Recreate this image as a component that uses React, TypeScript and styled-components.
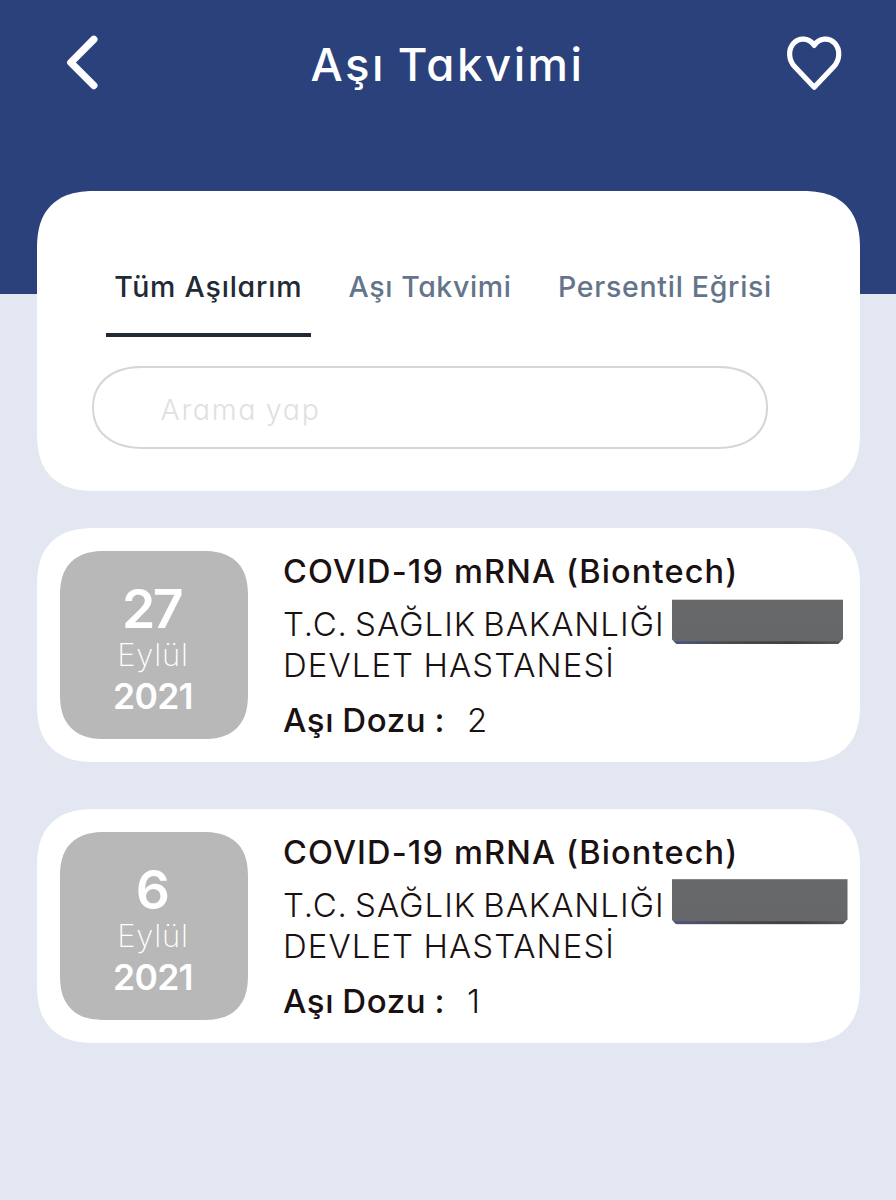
import React from 'react';
import styled, { createGlobalStyle } from 'styled-components';

const GlobalStyle = createGlobalStyle`
  * { box-sizing: border-box; }
  body {
    margin: 0;
    background: #e2e7f1;
    font-family: Inter, "Liberation Sans", sans-serif;
    font-feature-settings: "cv11";
  }
  h1, h2, p { margin: 0; font-weight: inherit; }
  button { padding: 0; border: 0; background: none; font: inherit; font-feature-settings: inherit; }
`;

const Screen = styled.div`
  min-height: 1200px;
  padding-bottom: 40px;
  background: linear-gradient(#2b417b 294px, #e2e7f1 294px);
`;

const Header = styled.header`
  display: flex;
  justify-content: space-between;
  height: 191px;
  padding: 35px 54px 0 66px;
  color: #fff;
`;

const IconButton = styled.button`
  display: block;
  height: 56px;
  color: inherit;

  svg { display: block; }
`;

const Title = styled.h1`
  height: 60px;
  padding-left: 10px;
  font-size: 45.5px;
  font-weight: 500;
  line-height: 60px;
  letter-spacing: 2.5px;
  word-spacing: -3px;
  white-space: nowrap;
`;

const Surface = styled.section`
  margin: 0 36.5px;
  background: #fff;
  border-radius: 50px;

  @supports (corner-shape: squircle) {
    border-radius: 58px;
    corner-shape: superellipse(1.3);
  }
`;

const FilterPanel = styled(Surface)`
  height: 300px;
  padding: 74px 55.5px 0;
`;

const Tabs = styled.nav`
  display: flex;
  height: 72px;
  padding-left: 14px;
`;

const Tab = styled.button<{ $active?: boolean; $width: number; $tracking: number }>`
  width: ${(p) => p.$width}px;
  margin-right: 15px;
  padding-bottom: 25px;
  border-bottom: 4.5px solid ${(p) => (p.$active ? '#212a35' : 'transparent')};
  color: ${(p) => (p.$active ? '#212a35' : '#64748a')};
  font-size: 28.5px;
  font-weight: ${(p) => (p.$active ? 500 : 460)};
  line-height: 43px;
  letter-spacing: ${(p) => p.$tracking}px;
  text-align: center;
  white-space: nowrap;
`;

const SearchField = styled.input`
  display: block;
  width: 676px;
  height: 83px;
  margin-top: 29px;
  padding: 4px 68px 0 66.5px;
  border: 2px solid #d6d6d6;
  border-radius: 42px;
  outline: none;
  background: transparent;
  font-family: inherit;
  font-feature-settings: inherit;
  font-size: 28.5px;
  font-weight: 300;
  letter-spacing: 1.7px;
  word-spacing: -1px;

  @supports (corner-shape: squircle) {
    border-radius: 50px / 41.5px;
    corner-shape: superellipse(1.15);
  }

  &::placeholder { color: #e0e0e0; opacity: 1; }
`;

const List = styled.main`
  display: flex;
  flex-direction: column;
  gap: 47px;
  padding-top: 37px;
`;

const Card = styled(Surface)`
  display: flex;
  height: 234px;
  padding: 23px 0 0 23px;
`;

const DateTile = styled.div`
  display: flex;
  flex-direction: column;
  align-items: center;
  width: 188px;
  height: 188px;
  padding: 28px 1px 0 0;
  background: #b8b8b8;
  border-radius: 40px;
  color: #fff;
  text-align: center;

  @supports (corner-shape: squircle) {
    border-radius: 45px;
    corner-shape: superellipse(1.3);
  }
`;

const Day = styled.span`
  margin-right: 3px;
  font-size: 53.5px;
  font-weight: 560;
  line-height: 60px;
  letter-spacing: -2.5px;
`;

const Month = styled.span`
  font-size: 31px;
  font-weight: 220;
  line-height: 32px;
  letter-spacing: 0.8px;
`;

const Year = styled.span`
  font-size: 35.5px;
  font-weight: 580;
  line-height: 51px;
  letter-spacing: -0.7px;
`;

const Info = styled.div`
  flex: 1;
  margin-left: 35.5px;
  color: #1a1112;
  white-space: nowrap;
`;

const VaccineName = styled.h2`
  font-size: 32.5px;
  font-weight: 500;
  line-height: 42px;
  letter-spacing: 1.15px;
`;

const Hospital = styled.div`
  margin-top: 10px;
  font-size: 33px;
  font-weight: 330;
`;

const HospitalLine = styled.p<{ $tracking: number; $gap?: number }>`
  display: flex;
  align-items: center;
  height: 41px;
  letter-spacing: ${(p) => p.$tracking}px;
  word-spacing: ${(p) => p.$gap ?? 0}px;
`;

const LineText = styled.span`
  width: 388.5px;
`;

const Redaction = styled.i<{ $width: number; $height: number; $lift: number }>`
  width: ${(p) => p.$width}px;
  height: ${(p) => p.$height}px;
  margin: -10px 0;
  transform: translateY(-${(p) => p.$lift}px);
  background:
    linear-gradient(90deg, #4a5588, #4b4b50 30%, #404042 70%, #58585a) bottom / 100% 3px no-repeat,
    linear-gradient(#68696b, #666769);
  clip-path: polygon(0 0, 100% 0, 100% calc(100% - 5px), calc(100% - 5px) 100%, 5px 100%, 0 calc(100% - 5px));
`;

const Dose = styled.p`
  display: flex;
  margin-top: 14px;
  font-size: 33px;
  line-height: 42px;
`;

const DoseLabel = styled.span`
  width: 184px;
  font-weight: 500;
  letter-spacing: 0.55px;
  word-spacing: -1px;
`;

const DoseValue = styled.span`
  font-weight: 330;
`;

type Vaccine = {
  day: string;
  dose: string;
  bar: { width: number; height: number; lift: number };
};

const vaccines: Vaccine[] = [
  { day: '27', dose: '2', bar: { width: 171.5, height: 44.5, lift: 1.8 } },
  { day: '6', dose: '1', bar: { width: 176, height: 45.5, lift: 2.8 } },
];

export default function App() {
  return (
    <Screen>
      <GlobalStyle />
      <Header>
        <IconButton aria-label="Geri">
          <svg width="33" height="56" viewBox="0 0 33 56" fill="none" stroke="currentColor" strokeWidth="7.4" strokeLinecap="round" strokeLinejoin="round">
            <path d="M27.8 4.3 4.8 27.5l23 23" />
          </svg>
        </IconButton>
        <Title>Aşı Takvimi</Title>
        <IconButton aria-label="Favorilere ekle">
          <svg width="56" height="56" viewBox="0 0 56 56" fill="none" stroke="currentColor" strokeWidth="5.2" strokeLinejoin="round">
            <path d="M28.2 52.2 8.8 31.8C2.4 24.9 1.9 14.6 7.6 8.3c5.9-6.3 15.6-5.4 20.6 2.1 5-7.5 14.7-8.4 20.6-2.1 5.7 6.3 5.2 16.6-1.2 23.5Z" />
          </svg>
        </IconButton>
      </Header>

      <FilterPanel>
        <Tabs>
          <Tab $active $width={204.5} $tracking={0.8}>Tüm Aşılarım</Tab>
          <Tab $width={209} $tracking={0.6}>Aşı Takvimi</Tab>
          <Tab $width={231} $tracking={0.7}>Persentil Eğrisi</Tab>
        </Tabs>
        <SearchField placeholder="Arama yap" />
      </FilterPanel>

      <List>
        {vaccines.map((v) => (
          <Card key={v.day}>
            <DateTile>
              <Day>{v.day}</Day>
              <Month>Eylül</Month>
              <Year>2021</Year>
            </DateTile>
            <Info>
              <VaccineName>COVID-19 mRNA (Biontech)</VaccineName>
              <Hospital>
                <HospitalLine $tracking={0.95} $gap={-3}>
                  <LineText>T.C. SAĞLIK BAKANLIĞI</LineText>
                  <Redaction $width={v.bar.width} $height={v.bar.height} $lift={v.bar.lift} />
                </HospitalLine>
                <HospitalLine $tracking={1.05} $gap={-1}>DEVLET HASTANESİ</HospitalLine>
              </Hospital>
              <Dose>
                <DoseLabel>Aşı Dozu :</DoseLabel>
                <DoseValue>{v.dose}</DoseValue>
              </Dose>
            </Info>
          </Card>
        ))}
      </List>
    </Screen>
  );
}
